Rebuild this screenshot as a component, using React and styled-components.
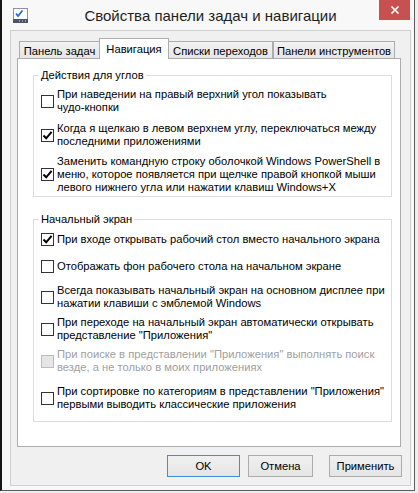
import styled, { createGlobalStyle } from "styled-components";

const GlobalStyle = createGlobalStyle`
  html, body {
    margin: 0;
    padding: 0;
    background: #eceef1;
  }
  body {
    font-family: "Liberation Sans", Arial, sans-serif;
    font-size: 11.2px;
    color: #000;
  }
`;

const Window = styled.div`
    width: 415px;
    height: 491px;
    box-sizing: border-box;
    display: flex;
    flex-direction: column;
    background: #f8f8f8;
    border-left: 2px solid #161616;
    border-right: 1px solid #5c5c5c;
    border-bottom: 1px solid #5c5c5c;
    padding: 0 3px 4px 8px;
`;

const TitleBar = styled.div`
    display: grid;
    grid-template-columns: 1fr auto 1fr;
    align-items: start;
    height: 30px;
    flex-shrink: 0;
`;

const IconSlot = styled.div`
    margin: 8px 0 0 3px;
    width: 16px;
    height: 16px;
`;

const Title = styled.div`
    font-size: 15px;
    line-height: 18px;
    padding-top: 7px;
    color: #1e1e1e;
    white-space: nowrap;
`;

const CloseButton = styled.div`
    justify-self: end;
    display: flex;
    align-items: center;
    justify-content: center;
    width: 31px;
    height: 20px;
    margin-right: 1px;
    background: #c75050;
`;

const Client = styled.div`
    flex: 1;
    display: flex;
    flex-direction: column;
    background: #f0f0f0;
    border: 1px solid #cfcfcf;
    padding: 7px 9px 0 6px;
`;

const TabRow = styled.div`
    display: flex;
    align-items: flex-end;
    padding-left: 2px;
    margin-bottom: -1px;
    position: relative;
    z-index: 1;
`;

const Tab = styled.div`
    box-sizing: border-box;
    width: ${(p) => p.$w}px;
    height: ${(p) => (p.$active ? 21 : 18)}px;
    margin-left: ${(p) => p.$shift}px;
    display: flex;
    align-items: center;
    justify-content: center;
    white-space: nowrap;
    border: 1px solid #acacac;
    border-bottom: ${(p) => (p.$active ? "none" : "1px solid #acacac")};
    background: ${(p) =>
        p.$active ? "#fff" : "linear-gradient(#f2f2f2, #e6e6e6)"};
    padding-top: ${(p) => (p.$active ? 0 : 1)}px;
`;

const Panel = styled.div`
    box-sizing: border-box;
    height: 389px;
    background: #fff;
    border: 1px solid #acacac;
    padding: 9px 8px 0 15px;
`;

const Group = styled.fieldset`
    margin: ${(p) => p.$top}px 0 0 0;
    padding: 0 6px ${(p) => p.$bottom}px 7px;
    border: 1px solid #dcdcdc;
    min-width: 0;
`;

const Legend = styled.legend`
    padding: 0 2px;
    margin-left: -2px;
    line-height: 14px;
    height: 14px;
`;

const Option = styled.div`
    display: flex;
    align-items: center;
    margin-top: ${(p) => p.$space}px;
`;

const Box = styled.div`
    box-sizing: border-box;
    flex-shrink: 0;
    width: 13px;
    height: 13px;
    border: 1px solid ${(p) => (p.$disabled ? "#bcbcbc" : "#333")};
    background: ${(p) => (p.$disabled ? "#e6e6e6" : "#fff")};
    display: flex;
    align-items: center;
    justify-content: center;
`;

const Label = styled.div`
    margin-left: 3px;
    line-height: 13px;
    white-space: nowrap;
    color: ${(p) => (p.$disabled ? "#a0a0a0" : "#000")};
`;

const ButtonRow = styled.div`
    display: flex;
    justify-content: flex-end;
    margin-top: 8px;
    margin-right: -1px;
`;

const Button = styled.div`
    box-sizing: border-box;
    width: ${(p) => p.$w}px;
    height: 22px;
    margin-left: ${(p) => p.$gap}px;
    display: flex;
    align-items: center;
    justify-content: center;
    background: linear-gradient(#f0f0f0, #e5e5e5);
    border: 1px solid ${(p) => (p.$default ? "#3c8fd8" : "#acacac")};
`;

const AppIcon = () => (
    <svg width="16" height="16" viewBox="0 0 16 16">
        <rect x="0.5" y="0.5" width="14" height="11" fill="#fff" stroke="#8c939c" />
        <path d="M3 5.5 L5 8 L9.5 2.5" stroke="#1f6fd1" strokeWidth="1.8" fill="none" />
        <rect x="0" y="11" width="15" height="4" fill="#4b5668" />
        <rect x="6" y="12.5" width="1" height="1" fill="#d0d6de" />
        <rect x="9" y="12.5" width="1" height="1" fill="#d0d6de" />
        <rect x="12" y="12.5" width="1" height="1" fill="#d0d6de" />
    </svg>
);

const CloseIcon = () => (
    <svg width="10" height="10" viewBox="0 0 10 10">
        <path d="M1.5 1.5 L8.5 8.5 M8.5 1.5 L1.5 8.5" stroke="#fff" strokeWidth="1.7" />
    </svg>
);

const Check = () => (
    <svg width="11" height="11" viewBox="0 0 11 11">
        <path d="M1.5 5.5 L4.2 8.3 L9.6 1.8" stroke="#000" strokeWidth="2" fill="none" />
    </svg>
);

const TABS = [
    { title: "Панель задач", w: 81, shift: 0 },
    { title: "Навигация", w: 70, shift: -1, active: true },
    { title: "Списки переходов", w: 105, shift: -1 },
    { title: "Панели инструментов", w: 122, shift: 0 },
];

const CORNERS = [
    {
        lines: ["При наведении на правый верхний угол показывать", "чудо-кнопки"],
        space: 6,
    },
    {
        lines: [
            "Когда я щелкаю в левом верхнем углу, переключаться между",
            "последними приложениями",
        ],
        checked: true,
        space: 8,
    },
    {
        lines: [
            "Заменить командную строку оболочкой Windows PowerShell в",
            "меню, которое появляется при щелчке правой кнопкой мыши",
            "левого нижнего угла или нажатии клавиш Windows+X",
        ],
        checked: true,
        space: 7,
    },
];

const START = [
    {
        lines: ["При входе открывать рабочий стол вместо начального экрана"],
        checked: true,
        space: 7,
    },
    {
        lines: ["Отображать фон рабочего стола на начальном экране"],
        space: 14,
    },
    {
        lines: [
            "Всегда показывать начальный экран на основном дисплее при",
            "нажатии клавиши с эмблемой Windows",
        ],
        space: 11,
    },
    {
        lines: [
            "При переходе на начальный экран автоматически открывать",
            'представление "Приложения"',
        ],
        space: 6,
    },
    {
        lines: [
            'При поиске в представлении "Приложения" выполнять поиск',
            "везде, а не только в моих приложениях",
        ],
        disabled: true,
        space: 6,
    },
    {
        lines: [
            'При сортировке по категориям в представлении "Приложения"',
            "первыми выводить классические приложения",
        ],
        space: 11,
    },
];

const OptionList = ({ items }) =>
    items.map((item, i) => (
        <Option key={i} $space={item.space}>
            <Box $disabled={item.disabled}>{item.checked && <Check />}</Box>
            <Label $disabled={item.disabled}>
                {item.lines.map((line, j) => (
                    <div key={j}>{line}</div>
                ))}
            </Label>
        </Option>
    ));

const App = () => {
    return (
        <>
            <GlobalStyle />
            <Window>
                <TitleBar>
                    <IconSlot>
                        <AppIcon />
                    </IconSlot>
                    <Title>Свойства панели задач и навигации</Title>
                    <CloseButton>
                        <CloseIcon />
                    </CloseButton>
                </TitleBar>
                <Client>
                    <TabRow>
                        {TABS.map((tab) => (
                            <Tab key={tab.title} $w={tab.w} $shift={tab.shift} $active={tab.active}>
                                {tab.title}
                            </Tab>
                        ))}
                    </TabRow>
                    <Panel>
                        <Group $top={0} $bottom={2}>
                            <Legend>Действия для углов</Legend>
                            <OptionList items={CORNERS} />
                        </Group>
                        <Group $top={15} $bottom={10}>
                            <Legend>Начальный экран</Legend>
                            <OptionList items={START} />
                        </Group>
                    </Panel>
                    <ButtonRow>
                        <Button $w={73} $gap={0} $default>
                            OK
                        </Button>
                        <Button $w={65} $gap={8}>
                            Отмена
                        </Button>
                        <Button $w={73} $gap={16}>
                            Применить
                        </Button>
                    </ButtonRow>
                </Client>
            </Window>
        </>
    );
};

export default App;
